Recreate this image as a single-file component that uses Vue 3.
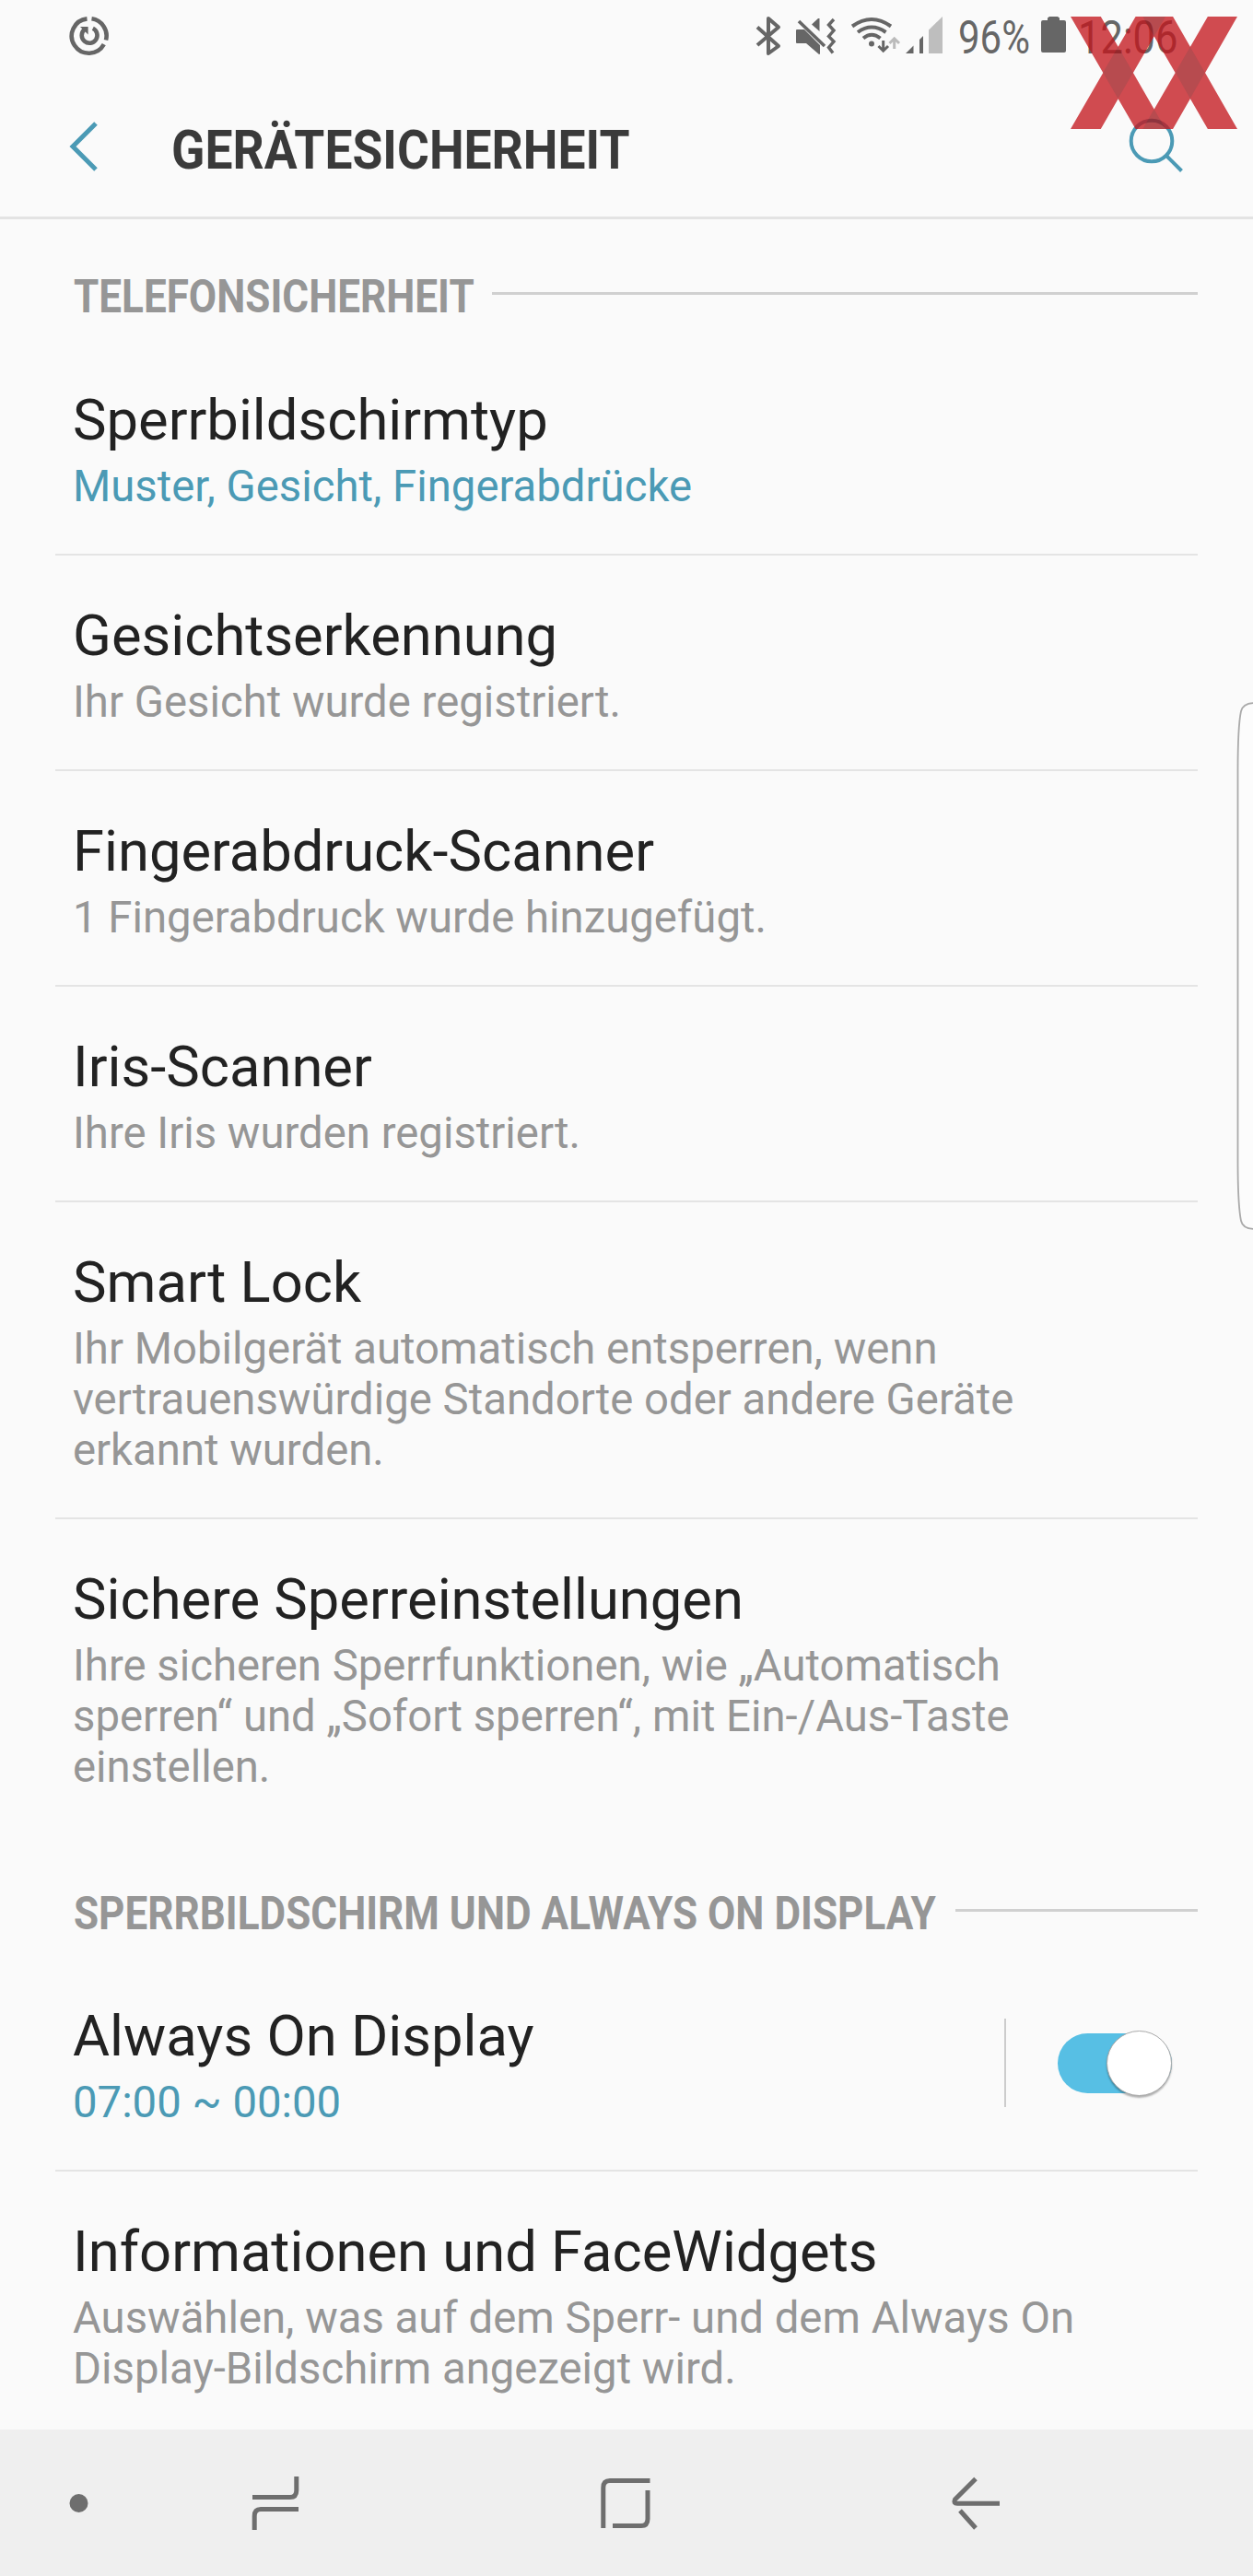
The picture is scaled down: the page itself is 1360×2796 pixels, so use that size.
<script setup>
import { ref } from 'vue'

const aodEnabled = ref(true)

const sections = ref([
  {
    title: 'TELEFONSICHERHEIT',
    size: 'short',
    items: [
      { title: 'Sperrbildschirmtyp', text: 'Muster, Gesicht, Fingerabdrücke', active: true },
      { title: 'Gesichtserkennung', text: 'Ihr Gesicht wurde registriert.' },
      { title: 'Fingerabdruck-Scanner', text: '1 Fingerabdruck wurde hinzugefügt.' },
      { title: 'Iris-Scanner', text: 'Ihre Iris wurden registriert.' },
      {
        title: 'Smart Lock',
        text: 'Ihr Mobilgerät automatisch entsperren, wenn\nvertrauenswürdige Standorte oder andere Geräte\nerkannt wurden.',
      },
      {
        title: 'Sichere Sperreinstellungen',
        text: 'Ihre sicheren Sperrfunktionen, wie „Automatisch\nsperren“ und „Sofort sperren“, mit Ein-/Aus-Taste\neinstellen.',
      },
    ],
  },
  {
    title: 'SPERRBILDSCHIRM UND ALWAYS ON DISPLAY',
    size: 'long',
    items: [
      { title: 'Always On Display', text: '07:00 ~ 00:00', active: true, toggle: true },
      {
        title: 'Informationen und FaceWidgets',
        text: 'Auswählen, was auf dem Sperr- und dem Always On\nDisplay-Bildschirm angezeigt wird.',
      },
    ],
  },
])
</script>

<template>
  <div class="screen">
    <!-- Status bar -->
    <div class="status-bar">
      <svg class="st-sync" width="44" height="44" viewBox="0 0 44 44" fill="none" stroke="#666" stroke-width="4.6">
        <path d="M24.5 3.3A18.7 18.7 0 0 1 40 26.5" />
        <path d="M37.8 31.2A18.7 18.7 0 1 1 19.5 3.4" />
        <path d="M25.8 13.8A8.4 8.4 0 1 1 16.4 15.2" />
        <path d="M12 12h8.6v8.6z" fill="#666" stroke="none" />
      </svg>
      <svg class="st-icons" width="206" height="44" viewBox="0 0 206 44" fill="none" stroke="#666">
        <!-- bluetooth -->
        <path d="M2 12.5L25 33L14 41V3L25 12.5L2 32" stroke-width="4" stroke-linejoin="round" />
        <!-- muted speaker with vibration -->
        <path d="M45 15h8l17 17v9.5L69 42L55 30h-10q-1 0-1-1V16q0-1 1-1z" fill="#666" stroke="none" />
        <path d="M61 9.5L68 3h1.500v14z" fill="#666" stroke="none" />
        <path d="M47 6L75 33" stroke-width="3.6" />
        <path d="M85 4L79.500 10L85 16L79.500 22.500L85 28L79.500 34.500L84 40.500" stroke-width="3.4" />
        <!-- wifi -->
        <path d="M105 11.500Q126 -3.500 147 11.500" stroke-width="4" />
        <path d="M111 18Q126 7 141.500 18" stroke-width="4" />
        <path d="M117 24.500Q126 17 135.500 24.500" stroke-width="4" />
        <circle cx="126" cy="30.5" r="3" fill="#666" stroke="none" />
        <path d="M138.700 27V38M133.500 33L138.700 38.200L144 33" stroke-width="3" />
        <path d="M150.700 36V25M145.500 30L150.700 24.800L156 30" stroke-width="3" stroke="#bbb" />
        <!-- signal -->
        <path d="M163 41L171.500 32.500V41zM178 26L182 22V41H178z" fill="#666" stroke="none" />
        <path d="M188 15.500L203 1V41H188z" fill="#bebebe" stroke="none" />
      </svg>
      <span class="st-text battery-text"><span>96%</span></span>
      <svg class="st-battery" width="27" height="41" viewBox="0 0 27 41">
        <path d="M9 1h9l2 1.500V5h5q2 0 2 2V38q0 2-2 2H2q-2 0-2-2V7Q0 5 2 5h5V2.500z" fill="#666" />
      </svg>
      <span class="st-text clock-text"><span>12:06</span></span>
    </div>

    <!-- App bar -->
    <header class="app-bar">
      <svg class="back" width="36" height="58" viewBox="0 0 36 58" fill="none" stroke="#4b9ab5" stroke-width="5">
        <path d="M31 4L6 29L31 54" />
      </svg>
      <h1><span>GERÄTESICHERHEIT</span></h1>
      <svg class="search" width="60" height="60" viewBox="0 0 60 60" fill="none" stroke="#4b9ab5" stroke-width="4">
        <circle cx="25" cy="25" r="22.3" />
        <path d="M41 41L57.500 57.500" />
      </svg>
    </header>

    <!-- Settings list -->
    <main class="list">
      <section v-for="section in sections" :key="section.title">
        <h2 :class="section.size"><span class="label"><span>{{ section.title }}</span></span></h2>
        <div v-for="item in section.items" :key="item.title" class="item">
          <div class="item-body">
            <div class="item-title">{{ item.title }}</div>
            <div class="item-text" :class="{ active: item.active }">{{ item.text }}</div>
          </div>
          <div v-if="item.toggle" class="toggle-area">
            <button class="toggle" :class="{ on: aodEnabled }" @click="aodEnabled = !aodEnabled">
              <span class="knob"></span>
            </button>
          </div>
        </div>
      </section>
    </main>

    <!-- Navigation bar -->
    <nav class="nav-bar">
      <svg width="1360" height="159" viewBox="0 0 1360 159" fill="none" stroke="#6e6e6e" stroke-width="5">
        <circle cx="85.5" cy="80" r="10" fill="#6e6e6e" stroke="none" />
        <path d="M274 73.500H315Q321.800 73.500 321.800 66V51" />
        <path d="M276.200 109V94Q276.200 86.500 283 86.500H324" />
        <path d="M654.800 107V63Q654.800 55.500 662 55.500H705.500" />
        <path d="M703 66V97Q703 104.500 696 104.500H665" />
        <path d="M1059 53.500L1036.500 76Q1034.500 80.300 1039 80.300H1085" />
        <path d="M1042 88L1059 107" />
      </svg>
    </nav>

    <!-- Edge panel handle -->
    <svg class="edge-handle" width="20" height="580" viewBox="0 0 20 580">
      <path d="M22 5Q9 5 7 14Q3.500 30 3.500 80V500Q3.500 550 7 567Q9 576 22 576" fill="#fcfcfc" stroke="#aaa" stroke-width="1.8" />
    </svg>

    <!-- Red logo over the clock -->
    <svg class="logo" width="181" height="122" viewBox="307 54 541 365" preserveAspectRatio="none">
      <g opacity="0.76">
        <path d="M307 54H405L615 419H518zM518 54H615L405 419H307zM541 54H639L848 419H752zM752 54H848L639 419H541z" fill="#c4151c" />
        <path d="M461 152L510 236L461 320L412 236zM695 152L743 236L695 320L647 236zM541 54H615L578 118zM578 355L615 419H541z" fill="#a3151a" />
      </g>
    </svg>
  </div>
</template>

<style>
body {
  margin: 0;
}
</style>

<style scoped>
.screen {
  position: relative;
  display: flex;
  flex-direction: column;
  width: 1360px;
  height: 2796px;
  overflow: hidden;
  background: #fafafa;
  font-family: Roboto, sans-serif;
}

.status-bar {
  display: flex;
  flex: none;
  height: 61px;
  padding: 17px 0 0 75px;
  color: #666;
}

.st-icons {
  margin-left: 701px;
}

.st-text {
  margin-top: 2px;
  font-size: 50px;
  line-height: 44px;
  white-space: nowrap;
}

.st-text span {
  display: inline-block;
  transform-origin: left;
}

.battery-text {
  width: 78px;
  margin-left: 14px;
}

.battery-text span {
  transform: scaleX(0.84);
}

.st-battery {
  margin-left: 12px;
}

.clock-text {
  margin-left: 13px;
}

.clock-text span {
  transform: scaleX(0.87);
}

.app-bar {
  display: flex;
  flex: none;
  align-items: center;
  height: 157px;
  border-bottom: 3px solid #e3e3e3;
}

.back {
  margin: 5px 0 0 73px;
}

h1 {
  flex: 1;
  margin: 12px 0 0 77px;
  font-size: 60px;
  font-weight: 700;
  line-height: 70px;
  color: #3a3a3a;
}

h1 span {
  display: inline-block;
  transform: scaleX(0.89);
  transform-origin: left;
}

.search {
  margin: 3px 75px 0 0;
}

.list {
  flex: 1;
  min-height: 0;
  overflow: hidden;
}

h2 {
  display: flex;
  align-items: flex-start;
  height: 75px;
  margin: 0;
  padding: 55px 60px 0 80px;
  font-size: 50px;
  font-weight: 700;
  line-height: 59px;
  color: #969696;
  white-space: nowrap;
}

h2.short {
  height: 76px;
}

h2::after {
  flex: 1;
  height: 3px;
  margin-top: 24px;
  background: #d0d0d0;
  content: '';
}

.label span {
  display: inline-block;
  transform: scaleX(0.881);
  transform-origin: left;
}

.short .label {
  width: 454px;
}

.long .label {
  width: 957px;
}

.item {
  display: flex;
  margin: 0 60px;
  padding: 51px 0 45px 19px;
  border-bottom: 2px solid #e4e4e4;
}

.item:last-child {
  border-bottom-color: transparent;
}

.item-body {
  flex: 1;
}

.item-title {
  font-size: 61.5px;
  line-height: 73px;
  color: #222;
  white-space: nowrap;
}

.item-text {
  margin-top: 8px;
  font-size: 47.3px;
  line-height: 55px;
  color: #969696;
  white-space: pre;
}

.item-text.active {
  color: #4b9ab5;
}

.toggle-area {
  display: flex;
  align-items: center;
  width: 208px;
  height: 96px;
  margin-top: 17px;
  border-left: 2px solid #ccc;
}

.toggle {
  display: flex;
  align-items: center;
  width: 124px;
  height: 65px;
  margin-left: 56px;
  padding: 0;
  border: 0;
  border-radius: 33px;
  background: #bbb;
}

.toggle.on {
  justify-content: flex-end;
  background: #57bfe4;
}

.knob {
  flex: none;
  box-sizing: border-box;
  width: 71px;
  height: 71px;
  border: 1px solid #aaa;
  border-radius: 50%;
  background: #fff;
  box-shadow: 0 2px 2px rgba(0, 0, 0, 0.3);
}

.nav-bar {
  flex: none;
  height: 159px;
  background: #efefef;
}

.edge-handle {
  position: absolute;
  top: 758px;
  right: 0;
}

.logo {
  position: absolute;
  top: 18px;
  left: 1162px;
}
</style>
